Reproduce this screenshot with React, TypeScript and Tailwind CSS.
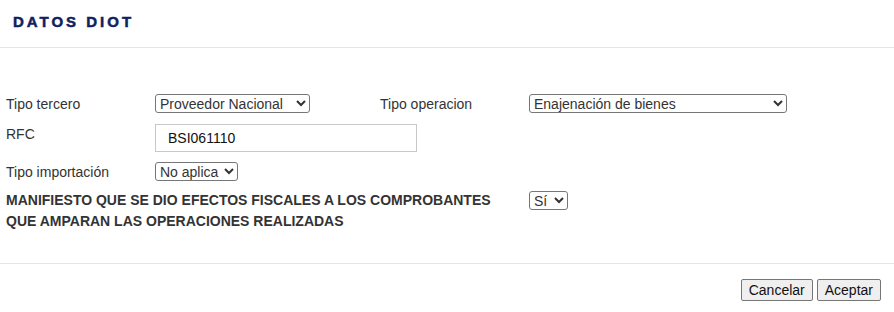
const selectCls =
  'h-[19px] rounded-[3px] border border-[#767676] bg-white pl-0 text-[14px] leading-[17px] text-[#333]';

export default function App() {
  return (
    <div className="w-[894px] h-[312px] bg-white font-['Liberation_Sans',Arial,sans-serif] text-[#333]">
      {/* header */}
      <div className="h-[48px] border-b border-[#e5e5e5] px-[13px] pt-[14px]">
        <h4 className="text-[15px] leading-[16px] font-bold tracking-[3px] text-[#0f2160] [-webkit-text-stroke:0.5px_#0f2160]">
          DATOS DIOT
        </h4>
      </div>

      {/* body */}
      <div className="h-[215px] pl-[6px] pt-[46px]">
        <div className="grid grid-cols-[149px_225px_149px_1fr] text-[14px] leading-[16px]">
          <div className="flex h-[19px] items-center">Tipo tercero</div>
          <div>
            <select className={selectCls + ' w-[155px]'} defaultValue="nac">
              <option value="nac">Proveedor Nacional</option>
              <option value="ext">Proveedor Extranjero</option>
            </select>
          </div>
          <div className="flex h-[19px] items-center">Tipo operacion</div>
          <div>
            <select className={selectCls + ' w-[258px]'} defaultValue="ena">
              <option value="ena">Enajenación de bienes</option>
              <option value="ser">Prestación de servicios profesionales</option>
            </select>
          </div>

          <div className="mt-[11px] pt-[2px]">RFC</div>
          <div className="col-span-3 mt-[11px]">
            <input
              className="h-[28px] w-[262px] border border-[#c8c8c8] px-[12px] text-[14px] text-[#111]"
              defaultValue="BSI061110"
            />
          </div>

          <div className="mt-[10px] flex h-[19px] items-center">Tipo importación</div>
          <div className="col-span-3 mt-[10px]">
            <select className={selectCls + ' w-[83px]'} defaultValue="na">
              <option value="na">No aplica</option>
              <option value="si">Temporal</option>
            </select>
          </div>

          <div className="col-span-3 mt-[9px] text-[14px] leading-[21px] font-bold">
            MANIFIESTO QUE SE DIO EFECTOS FISCALES A LOS COMPROBANTES
            <br />
            QUE AMPARAN LAS OPERACIONES REALIZADAS
          </div>
          <div className="mt-[10px]">
            <select className={selectCls + ' w-[39px]'} defaultValue="si">
              <option value="si">Sí</option>
              <option value="no">No</option>
            </select>
          </div>
        </div>
      </div>

      {/* footer */}
      <div className="flex justify-end gap-[4px] border-t border-[#e5e5e5] pr-[13px] pt-[15px]">
        <button className="h-[22px] rounded-[2px] border border-[#767676] bg-[#efefef] px-[7px] text-[14px] leading-[18px] text-[#111]">
          Cancelar
        </button>
        <button className="h-[22px] rounded-[2px] border border-[#767676] bg-[#efefef] px-[7px] text-[14px] leading-[18px] text-[#111]">
          Aceptar
        </button>
      </div>
    </div>
  );
}
